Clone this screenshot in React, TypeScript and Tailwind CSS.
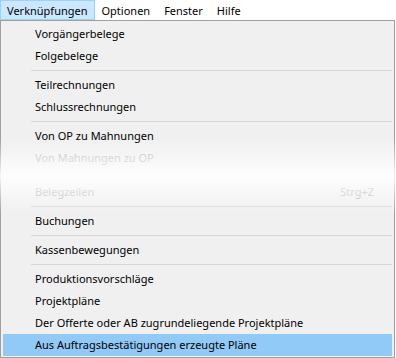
const menuBar = ["Verknüpfungen", "Optionen", "Fenster", "Hilfe"];

type Entry =
  | { kind: "item"; label: string; disabled?: boolean; shortcut?: string; active?: boolean }
  | { kind: "sep" }
  | { kind: "gap" };

const entries: Entry[] = [
  { kind: "item", label: "Vorgängerbelege" },
  { kind: "item", label: "Folgebelege" },
  { kind: "sep" },
  { kind: "item", label: "Teilrechnungen" },
  { kind: "item", label: "Schlussrechnungen" },
  { kind: "sep" },
  { kind: "item", label: "Von OP zu Mahnungen" },
  { kind: "item", label: "Von Mahnungen zu OP", disabled: true },
  { kind: "gap" },
  { kind: "item", label: "Belegzeilen", disabled: true, shortcut: "Strg+Z" },
  { kind: "sep" },
  { kind: "item", label: "Buchungen" },
  { kind: "sep" },
  { kind: "item", label: "Kassenbewegungen" },
  { kind: "sep" },
  { kind: "item", label: "Produktionsvorschläge" },
  { kind: "item", label: "Projektpläne" },
  { kind: "item", label: "Der Offerte oder AB zugrundeliegende Projektpläne" },
  { kind: "item", label: "Aus Auftragsbestätigungen erzeugte Pläne", active: true },
];

export default function App() {
  return (
    <div
      className="w-[396px] h-[358px] bg-white text-[11px] text-black overflow-hidden"
      style={{ fontFamily: '"Noto Sans", "Liberation Sans", sans-serif' }}
    >
      {/* menu bar */}
      <div className="flex h-[20px]">
        {menuBar.map((m, i) => (
          <div
            key={m}
            className={
              i === 0
                ? "flex items-center px-[6px] border border-[#99d1ff] bg-[#cce8ff] leading-none"
                : "flex items-center px-[7px] leading-none"
            }
          >
            {m}
          </div>
        ))}
      </div>

      {/* dropdown */}
      <div className="relative w-[395px] h-[338px] border border-[#a0a0a0] bg-[#f0f0f0] p-[2px]">
        <div className="flex flex-col">
          {entries.map((e, i) => {
            if (e.kind === "sep")
              return (
                <div key={i} className="h-[7px] flex items-center pl-[28px]">
                  <div className="h-px w-full bg-[#d7d7d7]" />
                </div>
              );
            if (e.kind === "gap") return <div key={i} className="h-[12px]" />;
            return (
              <div
                key={i}
                className={
                  "h-[22px] flex items-center justify-between pl-[32px] pr-[18px] " +
                  (e.active ? "bg-[#91c9f7]" : "")
                }
              >
                <span className={e.disabled ? "text-[#b4b4b4]" : ""}>{e.label}</span>
                {e.shortcut && <span className="text-[#b4b4b4]">{e.shortcut}</span>}
              </div>
            );
          })}
        </div>
        {/* fade band over the middle of the menu */}
        <div className="pointer-events-none absolute left-[-1px] right-[-1px] top-[118px] h-[74px] bg-gradient-to-b from-transparent via-white to-transparent opacity-90" />
      </div>
    </div>
  );
}
